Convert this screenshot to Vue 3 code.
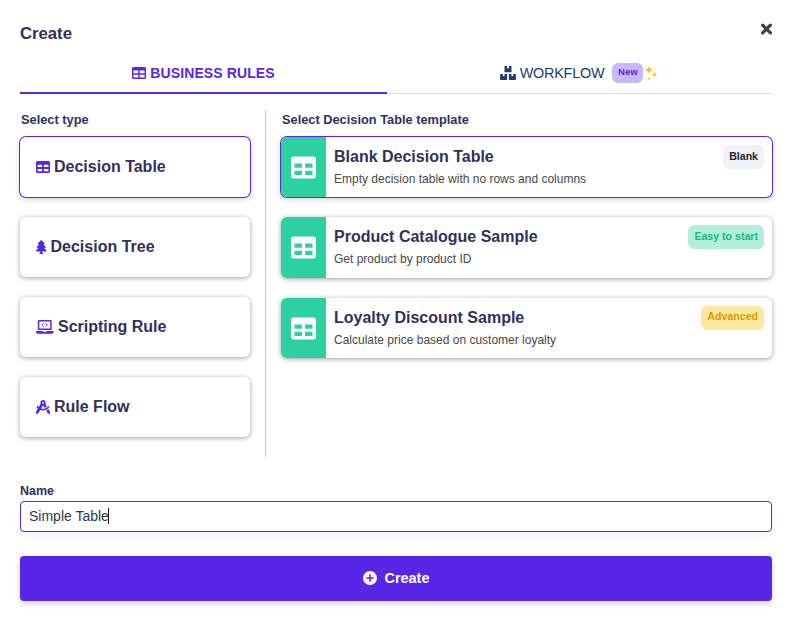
<script setup>
import { ref } from 'vue'

const types = [
  { id: 'table', label: 'Decision Table' },
  { id: 'tree', label: 'Decision Tree' },
  { id: 'script', label: 'Scripting Rule' },
  { id: 'flow', label: 'Rule Flow' },
]
const templates = [
  { title: 'Blank Decision Table', text: 'Empty decision table with no rows and columns', tag: 'Blank', tone: 'plain' },
  { title: 'Product Catalogue Sample', text: 'Get product by product ID', tag: 'Easy to start', tone: 'easy' },
  { title: 'Loyalty Discount Sample', text: 'Calculate price based on customer loyalty', tag: 'Advanced', tone: 'advanced' },
]
const selectedType = ref('table')
const selectedTemplate = ref(0)
const name = ref('Simple Table')
</script>

<template>
  <main class="dialog">
    <header class="head">
      <h1>Create</h1>
      <button class="close" aria-label="Close">
        <svg width="13" height="12" viewBox="0 0 13 12"><path d="M2.6 2.1 10.4 9.9M10.4 2.1 2.6 9.9" fill="none" stroke="currentColor" stroke-width="3.2" stroke-linecap="round" /></svg>
      </button>
    </header>

    <nav class="tabs">
      <div class="tab active">
        <svg width="14" height="12" viewBox="0 0 14 12"><path fill="currentColor" fill-rule="evenodd" d="M1.5 0h11A1.5 1.5 0 0 1 14 1.5v9a1.5 1.5 0 0 1-1.5 1.5h-11A1.5 1.5 0 0 1 0 10.5v-9A1.5 1.5 0 0 1 1.5 0ZM1.4 3.5v2.7h4.9V3.5ZM7.7 3.5v2.7h4.9V3.5ZM1.4 7.8v2.7h4.9V7.8ZM7.7 7.8v2.7h4.9V7.8Z" /></svg>
        <span>BUSINESS RULES</span>
      </div>
      <div class="tab">
        <svg width="16" height="14" viewBox="0 0 576 512"><path fill="currentColor" d="M560 288h-80v96l-32-21.300-32 21.300v-96h-80c-8.800 0-16 7.200-16 16v192c0 8.800 7.200 16 16 16h224c8.800 0 16-7.200 16-16V304c0-8.800-7.200-16-16-16zm-384-64h224c8.800 0 16-7.200 16-16V16c0-8.800-7.200-16-16-16h-80v96l-32-21.300L256 96V0h-80c-8.800 0-16 7.200-16 16v192c0 8.800 7.200 16 16 16zm64 64h-80v96l-32-21.300L96 384v-96H16c-8.800 0-16 7.200-16 16v192c0 8.800 7.200 16 16 16h224c8.800 0 16-7.200 16-16V304c0-8.800-7.200-16-16-16z" /></svg>
        <span class="workflow">WORKFLOW</span>
        <span class="new">New</span>
        <svg class="spark" width="12" height="14" viewBox="0 0 12 14"><path fill="currentColor" d="m4 .2 1.300 2.500 2.500 1.300-2.500 1.300L4 7.800 2.700 5.300.2 4l2.500-1.300ZM9.400 6l.9 1.700 1.700.9-1.700.9-.9 1.700-.9-1.700-1.700-.9 1.700-.9ZM4 11.200l.6.900.9.6-.9.600-.6.700-.6-.7-.9-.6.9-.6Z" /></svg>
      </div>
    </nav>

    <div class="columns">
      <section class="types">
        <h2>Select type</h2>
        <div class="list">
          <div v-for="t in types" :key="t.id" class="card type" :class="{ selected: selectedType === t.id }" @click="selectedType = t.id">
            <svg v-if="t.id === 'table'" width="14" height="12" viewBox="0 0 14 12"><path fill="currentColor" fill-rule="evenodd" d="M1.5 0h11A1.5 1.5 0 0 1 14 1.5v9a1.5 1.5 0 0 1-1.5 1.5h-11A1.5 1.5 0 0 1 0 10.5v-9A1.5 1.5 0 0 1 1.5 0ZM1.600 3.700v2.300h4.500V3.700ZM7.900 3.700v2.300h4.500V3.700ZM1.600 7.900v2.300h4.500V7.900ZM7.900 7.900v2.300h4.500V7.900Z" /></svg>
            <svg v-else-if="t.id === 'tree'" width="10.500" height="14" viewBox="0 0 384 512"><path fill="currentColor" d="M378.310 378.490L298.420 288h30.630c9.010 0 16.980-5 20.780-13.060 3.800-8.040 2.550-17.260-3.280-24.050L268.420 160h28.890c9.100 0 17.300-5.350 20.860-13.610 3.520-8.130 1.860-17.590-4.240-24.080L203.660 4.830c-6.030-6.450-17.280-6.450-23.320 0L70.060 122.310c-6.100 6.490-7.750 15.950-4.240 24.080C69.380 154.650 77.590 160 86.690 160h28.890l-78.140 90.910c-5.810 6.780-7.060 15.990-3.270 24.040C37.970 283 45.930 288 54.950 288h30.630L5.690 378.490c-6 6.790-7.360 16.090-3.560 24.260C5.860 410.800 14.290 416 23.570 416H160v24.450l-30.290 48.400c-5.320 10.640 2.420 23.160 14.310 23.160h95.960c11.890 0 19.630-12.520 14.310-23.160L224 440.450V416h136.430c9.280 0 17.710-5.200 21.440-13.240 3.800-8.180 2.440-17.480-3.560-24.270z" /></svg>
            <svg v-else-if="t.id === 'script'" class="laptop" width="17.500" height="14" viewBox="0 0 17.500 14"><path fill="currentColor" fill-rule="evenodd" d="M3.100 0h11.300a1.300 1.300 0 0 1 1.300 1.300V10H1.800V1.300A1.300 1.300 0 0 1 3.100 0ZM3.300 1.500v7H14.200v-7ZM.4 10.900h6.300q.2.900.9.900h2.300q.7 0 .9-.9h6.300q.4 0 .4.400v.4A2 2 0 0 1 15.700 13.700H1.800A2 2 0 0 1 0 11.700v-.4q0-.4.400-.4Z" /><path d="M7.600 3.600 6.200 5l1.400 1.400M9.900 3.600 11.300 5 9.900 6.400" fill="none" stroke="currentColor" stroke-width="1" stroke-linecap="round" /></svg>
            <svg v-else width="14" height="14" viewBox="0 0 512 512"><path fill="currentColor" d="M352 96c0 14.300-3.100 27.900-8.800 40.200L396 227.400c-23.700 25.300-54.200 44.100-88.500 53.600L256 192h0l-68 117.500c21.500 6.800 44.300 10.500 68.100 10.500c70.700 0 133.800-32.700 174.900-84c11.100-13.800 31.200-16 45-5s16 31.200 5 45C428.100 341.800 347 384 256 384c-35.400 0-69.400-6.400-100.700-18.100L98.700 463.700C94 471.800 87 478.400 78.600 482.600L23.200 510.300c-5 2.500-10.900 2.200-15.600-.7S0 501.500 0 496V440.600c0-8.400 2.200-16.700 6.500-24.100l60-103.700C53.700 301.600 41.800 289.300 31.200 276c-11.100-13.800-8.800-33.900 5-45s33.900-8.800 45 5c5.700 7.100 11.800 13.800 18.200 20.100l69.400-119.900c-5.600-12.200-8.800-25.800-8.800-40.200c0-53 43-96 96-96s96 43 96 96zm21 297.900c32.600-12.800 62.500-30.800 88.900-52.900l43.700 75.500c4.200 7.300 6.500 15.600 6.500 24.100V496c0 5.500-2.900 10.700-7.600 13.600s-10.600 3.200-15.600 .7l-55.400-27.700c-8.400-4.200-15.400-10.800-20.100-18.900L373 393.900zM256 128a32 32 0 1 0 0-64 32 32 0 1 0 0 64z" /></svg>
            <span>{{ t.label }}</span>
          </div>
        </div>
      </section>

      <section class="templates">
        <h2>Select Decision Table template</h2>
        <div class="list">
          <div v-for="(t, i) in templates" :key="t.title" class="card template" :class="[t.tone + '-card', { selected: selectedTemplate === i }]" @click="selectedTemplate = i">
            <div class="thumb">
              <svg width="25" height="25" viewBox="0 0 512 512"><path fill="currentColor" d="M464 32H48C21.490 32 0 53.490 0 80v352c0 26.510 21.490 48 48 48h416c26.510 0 48-21.490 48-48V80c0-26.510-21.490-48-48-48zM224 408H72v-84h152v84zm0-148H72v-84h152v84zm216 148H288v-84h152v84zm0-148H288v-84h152v84z" /></svg>
            </div>
            <div class="info">
              <h3>{{ t.title }}</h3>
              <p>{{ t.text }}</p>
            </div>
            <span class="tag" :class="t.tone">{{ t.tag }}</span>
          </div>
        </div>
      </section>
    </div>

    <div class="field">
      <label>Name</label>
      <div class="input"><span>{{ name }}</span><i class="caret"></i></div>
    </div>

    <button class="submit">
      <svg width="14" height="14" viewBox="0 0 14 14"><circle cx="7" cy="7" r="7" fill="currentColor" /><path d="M7 3.800v6.400M3.800 7h6.400" stroke="#5925e6" stroke-width="1.500" stroke-linecap="round" /></svg>
      <span>Create</span>
    </button>
  </main>
</template>

<style>
body { background: #fff; }
</style>

<style scoped>
* { box-sizing: border-box; }
.dialog { width: 792px; height: 623px; padding: 20px 20px 0; display: flex; flex-direction: column; font-family: "Liberation Sans", Arial, sans-serif; color: #32305c; overflow: hidden; }
h1, h2, h3, p { margin: 0; }
svg { flex: none; display: block; }
.head { height: 32px; display: flex; justify-content: space-between; align-items: flex-start; }
h1 { font-size: 16.700px; line-height: 27px; }
.close { border: 0; background: none; padding: 3px 0 0; color: #404040; margin-right: -1px; }
.tabs { height: 42px; display: flex; box-shadow: inset 0 -1px #dedede; }
.tab { width: 385px; display: flex; align-items: center; justify-content: center; gap: 4px; font-size: 14.400px; color: #1e3a70; padding-right: 2px; }
.tab.active { width: 367px; color: #5925e6; font-size: 14px; font-weight: 700; border-bottom: 2px solid #5925e6; letter-spacing: .1px; padding: 2px 0 0; }
.workflow { letter-spacing: -.2px; }
.new { height: 20px; width: 31px; margin-left: 4px; border-radius: 6px; background: #c9b8f8; color: #5925e6; font-size: 9.500px; font-weight: 700; line-height: 18px; text-align: center; }
.spark { color: #fbbf24; margin-left: -2px; }
.columns { display: flex; margin-top: 16px; height: 347px; }
.types { width: 246px; padding-right: 15px; border-right: 1px solid #ccc; }
.templates { flex: 1; padding-left: 15px; }
h2 { font-size: 12.800px; line-height: 19px; height: 27px; padding-left: 1px; }
.list { display: flex; flex-direction: column; gap: 20px; }
.card { border-radius: 6px; background: #fff; box-shadow: 0 1px 5px rgba(0, 0, 0, .38); display: flex; }
.card.selected { box-shadow: 0 0 0 1px #5925e6, 0 2px 6px rgba(0, 0, 0, .2); }
.type { height: 60px; align-items: center; padding-left: 16px; gap: 4px; font-size: 16px; font-weight: 700; }
.type svg { color: #5925e6; }
.laptop { margin-right: .5px; }
.template { height: 60px; }
.easy-card { height: 61px; }
.thumb { width: 45px; border-radius: 6px 0 0 6px; background: #2dd19f; color: #fff; display: flex; align-items: center; justify-content: center; }
.info { flex: 1; padding: 10px 0 0 8px; }
h3 { font-size: 16px; line-height: 20px; }
.info p { font-size: 12px; line-height: 16px; margin-top: 4px; color: #484848; }
.tag { height: 24px; margin: 8px 8px 0 0; padding: 0 6px; border-radius: 6px; font-size: 10.600px; line-height: 22px; font-weight: 700; white-space: nowrap; }
.plain { background: #eff2f8; color: #27272f; }
.easy { background: #b2efda; color: #1eb582; }
.advanced { background: #ffe7a0; color: #d39c00; line-height: 21px; }
.field { margin-top: 24px; }
label { display: block; height: 20px; line-height: 20px; font-size: 12.500px; font-weight: 700; }
.input { height: 31px; border: 1px solid #5925e6; border-radius: 4px; padding: 0 0 2px 8px; display: flex; align-items: center; font-size: 14px; color: #2c3a4e; box-shadow: 0 4px 8px rgba(89, 37, 230, .07); }
.caret { width: 1px; height: 16px; margin-left: -1px; background: #111; }
.submit { margin-top: 24px; height: 45px; flex: none; border: 0; border-radius: 4px; background: #5925e6; color: #fff; display: flex; align-items: center; justify-content: center; gap: 8px; padding: 0 6px 2px; font: 700 14.400px "Liberation Sans", Arial, sans-serif; box-shadow: 0 3px 6px rgba(40, 40, 80, .18); }
</style>
